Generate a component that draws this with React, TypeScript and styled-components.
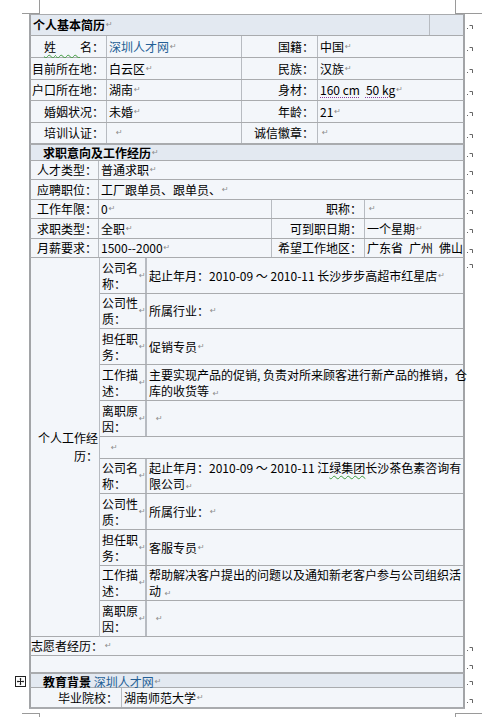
import React from "react";
import styled, { createGlobalStyle } from "styled-components";

const C = {
  bg: "#f3f6fa",
  head: "#e3e9f1",
  line: "#a9abae",
  inner: "#b7bbc1",
  outer: "#a2a4a7",
  blue: "#245f95",
  mark: "#8c8c8c",
};

const GlobalStyle = createGlobalStyle`
  html, body { margin: 0; padding: 0; background: #fff; }
  body {
    font-family: "Noto Sans CJK SC", "Noto Sans", sans-serif;
    font-size: 12px;
    color: #000;
  }
`;

const Page = styled.div`
  position: relative;
  box-sizing: border-box;
  width: 482px;
  height: 717px;
  overflow: hidden;
  background: #fff;
  padding: 14px 0 0 29px;
`;

const Crop = styled.div<{ $l: number; $t: number; $w: number; $h: number; $side: "left" | "right"; $edge: "top" | "bottom" }>`
  position: absolute;
  left: ${(p) => p.$l}px;
  top: ${(p) => p.$t}px;
  width: ${(p) => p.$w}px;
  height: ${(p) => p.$h}px;
  box-sizing: border-box;
  border-${(p) => p.$side}: 1px solid #9a9a9a;
  border-${(p) => p.$edge}: 1px solid #9a9a9a;
`;

const Doc = styled.div`
  display: flex;
  flex-direction: column;
  align-items: flex-start;
`;

const Line = styled.div<{ $top?: boolean }>`
  position: relative;
  display: flex;
  align-items: ${(p) => (p.$top ? "flex-start" : "center")};
`;

const Row = styled.div<{ $cols: string; $h: number; $head?: boolean; $bt?: number; $bb?: number }>`
  box-sizing: border-box;
  width: 436px;
  height: ${(p) => p.$h}px;
  display: grid;
  grid-template-columns: ${(p) => p.$cols};
  background: ${(p) => (p.$head ? C.head : C.bg)};
  border-left: 2px solid ${C.outer};
  border-right: 2px solid ${C.outer};
  border-top: ${(p) => p.$bt ?? 0}px solid ${C.line};
  border-bottom: ${(p) => p.$bb ?? 1}px solid ${C.line};
`;

const Cell = styled.div<{ $end?: boolean; $pl?: number; $pr?: number; $edge?: boolean; $bw?: number }>`
  box-sizing: border-box;
  min-width: 0;
  display: flex;
  align-items: center;
  justify-content: ${(p) => (p.$end ? "flex-end" : "flex-start")};
  padding-left: ${(p) => p.$pl ?? 2}px;
  padding-right: ${(p) => p.$pr ?? 0}px;
  border-left: ${(p) => (p.$edge ? "none" : `${p.$bw ?? 1}px solid ${C.inner}`)};
  font-size: 12px;
  line-height: 16px;
  white-space: nowrap;
`;

const Title = styled.span`
  font-weight: 700;
`;

const Blue = styled.span`
  color: ${C.blue};
`;

const Wavy = styled.span`
  text-decoration: underline wavy #3f9b3f;
  text-decoration-thickness: 1px;
  text-underline-offset: 2px;
`;

const Dotted = styled.span`
  text-decoration: underline dotted #8b3f9c;
  text-underline-offset: 2px;
`;

const PmGlyph = styled.span`
  font-family: "DejaVu Sans", sans-serif;
  font-size: 8px;
  color: ${C.mark};
  margin-left: 1px;
  line-height: 1;
  font-weight: 400;
`;
const Pm = () => <PmGlyph>↵</PmGlyph>;

const MarkSvg = styled.svg<{ $mt?: number }>`
  flex: none;
  margin-left: 1px;
  margin-top: ${(p) => p.$mt ?? 0}px;
`;
const EndMark = ({ mt }: { mt?: number }) => (
  <MarkSvg $mt={mt} width="8" height="12" viewBox="0 0 8 12">
    <rect x="1" y="9" width="1" height="1" fill="#666" />
    <path d="M3.5 6.5H6.5V10" stroke="#666" fill="none" strokeWidth="1" />
  </MarkSvg>
);

/* section 3 */
const ExpBlock = styled.div`
  box-sizing: border-box;
  width: 436px;
  display: flex;
  background: ${C.bg};
  border-left: 2px solid ${C.outer};
  border-right: 2px solid ${C.outer};
`;

const ExpLabel = styled.div`
  box-sizing: border-box;
  width: 68px;
  flex: none;
  display: flex;
  align-items: center;
  justify-content: flex-end;
  text-align: right;
  padding: 0 1px 0 4px;
  border-bottom: 1px solid ${C.line};
  font-size: 12px;
  line-height: 18px;
  word-break: break-all;
`;

const ExpStack = styled.div`
  width: 364px;
  display: flex;
  flex-direction: column;
  border-left: 1px solid ${C.inner};
`;

const SubRow = styled.div<{ $h: number; $single?: boolean }>`
  box-sizing: border-box;
  height: ${(p) => p.$h}px;
  display: grid;
  grid-template-columns: ${(p) => (p.$single ? "1fr" : "45px 318px")};
  border-bottom: 1px solid ${C.line};
`;

const SubLabel = styled.div`
  box-sizing: border-box;
  display: flex;
  align-items: center;
  padding-left: 2px;
  font-size: 12px;
  line-height: 16px;
  white-space: nowrap;
`;

const SubValue = styled.div<{ $pl?: number }>`
  box-sizing: border-box;
  display: flex;
  align-items: center;
  padding-left: ${(p) => p.$pl ?? 2}px;
  border-left: 2px solid ${C.inner};
  font-size: 12px;
  line-height: 16px;
  white-space: nowrap;
`;

const MoveHandle = styled.svg`
  position: absolute;
  left: -14px;
  top: 2px;
`;

type Basic = { h: number; label: React.ReactNode; value: React.ReactNode; vpl?: number; rlabel: string; rvalue: React.ReactNode; rpl?: number };

const basic: Basic[] = [
  {
    h: 22,
    label: (
      <>
        <Wavy>姓{"\u2003\u2003"}</Wavy>名：
      </>
    ),
    value: (
      <>
        <Blue>深圳人才网</Blue>
        <Pm />
      </>
    ),
    rlabel: "国籍：",
    rvalue: (
      <>
        中国
        <Pm />
      </>
    ),
  },
  { h: 22, label: "目前所在地：", value: <>白云区<Pm /></>, rlabel: "民族：", rvalue: <>汉族<Pm /></> },
  {
    h: 21,
    label: "户口所在地：",
    value: <>湖南<Pm /></>,
    rlabel: "身材：",
    rvalue: (
      <>
        <Dotted>160 cm</Dotted>
        {"\u2002 "}
        <Dotted>50 kg</Dotted>
        <Pm />
      </>
    ),
  },
  { h: 22, label: "婚姻状况：", value: <>未婚<Pm /></>, rlabel: "年龄：", rvalue: <>21<Pm /></> },
  { h: 21, label: "培训认证：", value: <Pm />, vpl: 8, rlabel: "诚信徽章：", rvalue: <Pm />, rpl: 3 },
];

type Sub = { h: number; label: React.ReactNode; value: React.ReactNode; pl?: number };

const jobs: Sub[][] = [
  [
    { h: 36, label: <>公司名<br />称：<Pm /></>, value: <>起止年月：2010-09 ～ 2010-11 长沙步步高超市红星店<Pm /></> },
    { h: 35, label: <>公司性<br />质：<Pm /></>, value: <>所属行业：<Pm /></> },
    { h: 36, label: <>担任职<br />务：<Pm /></>, value: <>促销专员 <Pm /></> },
    {
      h: 36,
      label: <>工作描<br />述：<Pm /></>,
      value: (
        <span>
          主要实现产品的促销, 负责对所来顾客进行新产品的推销，仓
          <br />
          库的收货等 <Pm />
        </span>
      ),
    },
    { h: 36, label: <>离职原<br />因：<Pm /></>, value: <Pm />, pl: 8 },
  ],
  [
    {
      h: 35,
      label: <>公司名<br />称：<Pm /></>,
      value: (
        <span>
          起止年月：2010-09 ～ 2010-11 江<Wavy>绿集团</Wavy>长沙茶色素咨询有
          <br />
          限公司<Pm />
        </span>
      ),
    },
    { h: 36, label: <>公司性<br />质：<Pm /></>, value: <>所属行业：<Pm /></> },
    { h: 36, label: <>担任职<br />务：<Pm /></>, value: <>客服专员 <Pm /></> },
    {
      h: 35,
      label: <>工作描<br />述：<Pm /></>,
      value: (
        <span>
          帮助解决客户提出的问题以及通知新老客户参与公司组织活
          <br />
          动 <Pm />
        </span>
      ),
    },
    { h: 36, label: <>离职原<br />因：<Pm /></>, value: <Pm />, pl: 8 },
  ],
];

const COLS1 = "75px 135px 76px 146px";
const COLS2 = "67px 173px 93px 99px";

export default function App() {
  return (
    <Page>
      <GlobalStyle />
      <Crop $l={22} $t={0} $w={18} $h={14} $side="right" $edge="bottom" />
      <Crop $l={455} $t={0} $w={27} $h={14} $side="left" $edge="bottom" />
      <Crop $l={22} $t={713} $w={18} $h={4} $side="right" $edge="top" />
      <Crop $l={455} $t={713} $w={27} $h={4} $side="left" $edge="top" />

      <Doc>
        {/* 个人基本简历 */}
        <Line>
          <Row $cols="398px 34px" $h={22} $head $bt={1}>
            <Cell $edge $pl={2}>
              <Title>个人基本简历</Title>
              <Pm />
            </Cell>
            <Cell />
          </Row>
          <EndMark />
        </Line>
        {basic.map((r, i) => (
          <Line key={i}>
            <Row $cols={COLS1} $h={r.h}>
              <Cell $edge $end $pr={2}>
                {r.label}
              </Cell>
              <Cell $pl={r.vpl ?? 2}>{r.value}</Cell>
              <Cell $end $pr={3}>
                {r.rlabel}
              </Cell>
              <Cell $pl={r.rpl ?? 2}>{r.rvalue}</Cell>
            </Row>
            <EndMark />
          </Line>
        ))}

        {/* 求职意向及工作经历 */}
        <Line>
          <Row $cols="1fr" $h={17} $head $bt={1}>
            <Cell $edge $pl={12}>
              <Title>求职意向及工作经历</Title>
              <Pm />
            </Cell>
          </Row>
          <EndMark />
        </Line>
        <Line>
          <Row $cols="67px 365px" $h={19}>
            <Cell $edge $end $pr={1}>人才类型：</Cell>
            <Cell>普通求职 <Pm /></Cell>
          </Row>
          <EndMark />
        </Line>
        <Line>
          <Row $cols="67px 365px" $h={20}>
            <Cell $edge $end $pr={1}>应聘职位：</Cell>
            <Cell>工厂跟单员、跟单员、<Pm /></Cell>
          </Row>
          <EndMark />
        </Line>
        <Line>
          <Row $cols={COLS2} $h={19}>
            <Cell $edge $end $pr={1}>工作年限：</Cell>
            <Cell>0<Pm /></Cell>
            <Cell $end $pr={2}>职称：</Cell>
            <Cell $pl={3}><Pm /></Cell>
          </Row>
          <EndMark />
        </Line>
        <Line>
          <Row $cols={COLS2} $h={20}>
            <Cell $edge $end $pr={1}>求职类型：</Cell>
            <Cell>全职<Pm /></Cell>
            <Cell $end $pr={2}>可到职日期：</Cell>
            <Cell>一个星期<Pm /></Cell>
          </Row>
          <EndMark />
        </Line>
        <Line>
          <Row $cols={COLS2} $h={19}>
            <Cell $edge $end $pr={1}>月薪要求：</Cell>
            <Cell>1500--2000<Pm /></Cell>
            <Cell $end $pr={2}>希望工作地区：</Cell>
            <Cell>广东省{"\u2002"}广州{"\u2002"}佛山</Cell>
          </Row>
          <EndMark />
        </Line>

        {/* 个人工作经历 */}
        <Line $top>
          <ExpBlock>
            <ExpLabel>个人工作经历：</ExpLabel>
            <ExpStack>
              {jobs[0].map((s, i) => (
                <SubRow key={"a" + i} $h={s.h}>
                  <SubLabel>{s.label}</SubLabel>
                  <SubValue $pl={s.pl}>{s.value}</SubValue>
                </SubRow>
              ))}
              <SubRow $h={22} $single>
                <SubLabel style={{ paddingLeft: 10 }}>
                  <Pm />
                </SubLabel>
              </SubRow>
              {jobs[1].map((s, i) => (
                <SubRow key={"b" + i} $h={s.h}>
                  <SubLabel>{s.label}</SubLabel>
                  <SubValue $pl={s.pl}>{s.value}</SubValue>
                </SubRow>
              ))}
            </ExpStack>
          </ExpBlock>
          <EndMark mt={0} />
        </Line>

        {/* 志愿者经历 */}
        <Line>
          <Row $cols="72px 360px" $h={19}>
            <Cell $edge $pl={0}>志愿者经历：</Cell>
            <Cell $pl={0} style={{ borderLeftColor: "transparent" }}>
              <Pm />
            </Cell>
          </Row>
          <EndMark />
        </Line>
        <Line>
          <Row $cols="1fr" $h={18} $bb={2}>
            <Cell $edge />
          </Row>
          <EndMark />
        </Line>

        {/* 教育背景 */}
        <Line>
          <MoveHandle width="11" height="11" viewBox="0 0 11 11">
            <rect x="0.5" y="0.5" width="10" height="10" fill="#fff" stroke="#222" />
            <path d="M5.5 2.5V8.5M2.5 5.5H8.5" stroke="#222" strokeWidth="1" />
            <path d="M5.5 1.8L4.3 3.2H6.7Z M5.5 9.2L4.3 7.8H6.7Z M1.8 5.5L3.2 4.3V6.7Z M9.2 5.5L7.8 4.3V6.7Z" fill="#222" />
          </MoveHandle>
          <Row $cols="1fr" $h={14} $head>
            <Cell $edge $pl={12}>
              <Title>教育背景</Title>
              &nbsp;<Blue>深圳人才网</Blue>
              <Pm />
            </Cell>
          </Row>
          <EndMark />
        </Line>
        <Line>
          <Row $cols="90px 342px" $h={21} $bb={2}>
            <Cell $edge $end $pr={3}>毕业院校：</Cell>
            <Cell>湖南师范大学 <Pm /></Cell>
          </Row>
          <EndMark />
        </Line>
      </Doc>
    </Page>
  );
}
